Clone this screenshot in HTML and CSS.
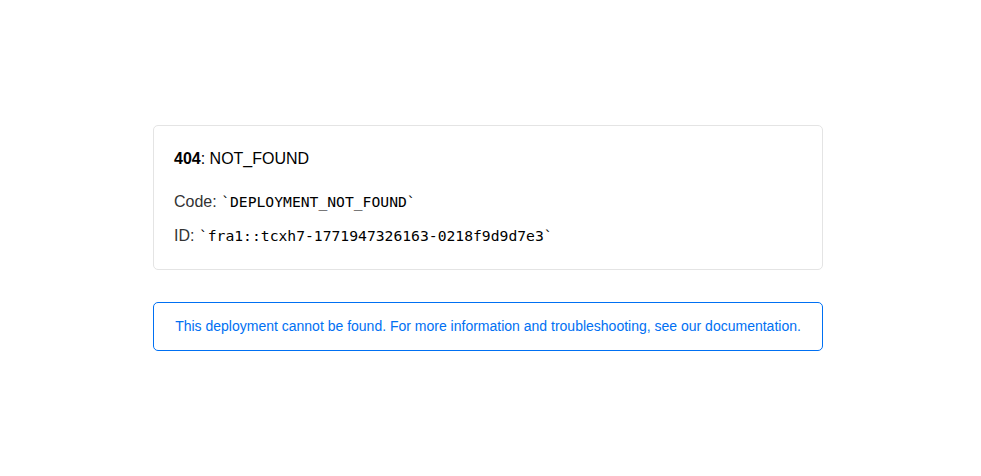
FILE: index.html
```html
<!DOCTYPE html>
<html lang="en">
<head>
<meta charset="utf-8">
<title>404: NOT_FOUND</title>
<link rel="stylesheet" href="styles.css">
</head>
<body>
<main class="page">
  <div class="devinfo">
    <p class="error-code"><strong>404</strong>: NOT_FOUND</p>
    <p class="devinfo-line">Code: <code>`DEPLOYMENT_NOT_FOUND`</code></p>
    <p class="devinfo-line">ID: <code>`fra1::tcxh7-1771947326163-0218f9d9d7e3`</code></p>
  </div>
  <div class="note">This deployment cannot be found. For more information and troubleshooting, see our documentation.</div>
</main>
</body>
</html>
```
FILE: styles.css
```css
html, body {
  margin: 0;
  padding: 0;
  background: #fff;
}
body {
  font-family: "Liberation Sans", Arial, sans-serif;
  color: #000;
}
.page {
  display: flex;
  flex-direction: column;
  gap: 32px;
  width: 670px;
  padding: 125px 0 0 153px;
}
.devinfo {
  border: 1px solid #e4e4e4;
  border-radius: 5px;
  padding: 23px 20px 16px;
  display: flex;
  flex-direction: column;
}
.devinfo p {
  margin: 0;
}
.error-code {
  font-size: 16px;
  line-height: 19px;
  margin-bottom: 17px !important;
}
.devinfo-line {
  font-size: 16px;
  line-height: 34px;
  color: #333;
}
.devinfo-line code {
  font-family: "DejaVu Sans Mono", monospace;
  font-size: 14.7px;
  color: #000;
}
.note {
  border: 1px solid #0070f3;
  border-radius: 5px;
  color: #0070f3;
  font-size: 14px;
  line-height: 47px;
  text-align: center;
}
```
